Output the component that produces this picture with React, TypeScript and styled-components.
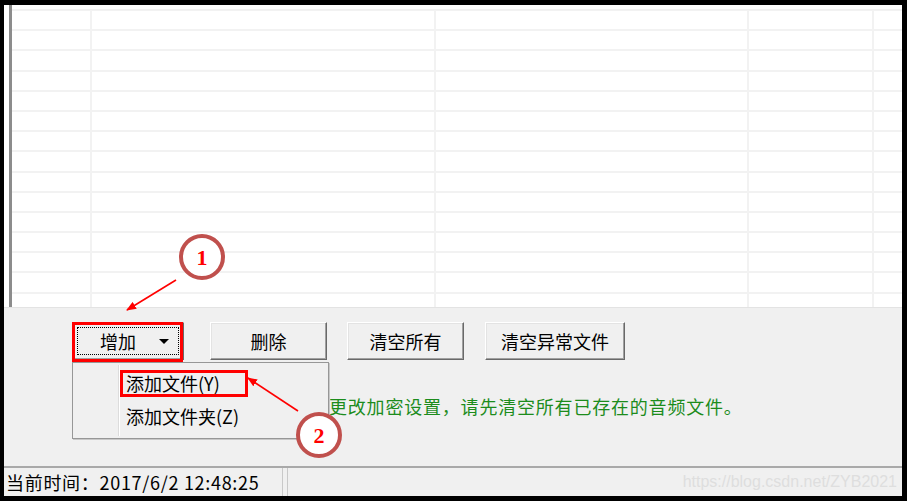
import React from 'react';
import styled, { createGlobalStyle } from 'styled-components';

const GlobalStyle = createGlobalStyle`
  html, body {
    margin: 0;
    padding: 0;
    background: #000;
  }
  * {
    box-sizing: border-box;
  }
`;

const cjk = `"Noto Sans CJK SC", "Liberation Sans", sans-serif`;

const Frame = styled.div`
  position: relative;
  width: 907px;
  height: 501px;
  border-style: solid;
  border-color: #000;
  border-width: 5px 5px 5px 4px;
  background: #f0f0f0;
  display: flex;
  flex-direction: column;
  font-family: ${cjk};
  overflow: hidden;
`;

const ListPanel = styled.div`
  height: 303px;
  background: #fff;
  padding-left: 5px;
  display: flex;
  border-bottom: 1px solid #e3e3e3;
`;

const Grid = styled.div`
  flex: 1;
  border-left: 3px solid #8c8c8c;
  display: flex;
  flex-direction: column;
  overflow: hidden;
`;

const TopGap = styled.div`
  height: 4px;
  flex: none;
`;

const Row = styled.div`
  flex: none;
  height: 20.2px;
  border-top: 2px solid #f2f2f2;
  display: grid;
  grid-template-columns: 80px 344px 313px 125px 1fr;
`;

const Cell = styled.div<{ last?: boolean }>`
  border-right: ${p => (p.last ? 'none' : '2px solid #f2f2f2')};
`;

const Controls = styled.div`
  flex: 1;
  display: flex;
  flex-direction: column;
  padding-top: 14px;
`;

const ButtonRow = styled.div`
  display: flex;
  padding-left: 68px;
`;

const Button = styled.div<{ w: number; gap?: number }>`
  position: relative;
  width: ${p => p.w}px;
  height: 38px;
  margin-right: ${p => p.gap ?? 20}px;
  background: #f0f0f0;
  border: 1px solid;
  border-color: #fff #696969 #696969 #fff;
  box-shadow: inset -1px -1px 0 #a0a0a0, inset 1px 1px 0 #e3e3e3;
  display: flex;
  align-items: center;
  justify-content: center;
  font-size: 18px;
  color: #000;
`;

const FocusRect = styled.div`
  flex: 1;
  align-self: stretch;
  margin: 4px;
  border: 1px dotted #000;
  display: flex;
  align-items: center;
  padding-left: 22px;
  padding-right: 9px;
`;

const ButtonText = styled.span`
  flex: 1;
`;

const Caret = styled.span`
  width: 0;
  height: 0;
  border-left: 5px solid transparent;
  border-right: 5px solid transparent;
  border-top: 5px solid #000;
`;

const RedBox = styled.div<{ t: number; l: number; w: number; h: number }>`
  position: absolute;
  top: ${p => p.t}px;
  left: ${p => p.l}px;
  width: ${p => p.w}px;
  height: ${p => p.h}px;
  border: 3px solid #ff0000;
  pointer-events: none;
`;

const Menu = styled.div`
  position: absolute;
  top: 39px;
  left: -1px;
  width: 257px;
  height: 77px;
  background: #f0f0f0;
  border: 1px solid #979797;
  box-shadow: 1px 1px 0 #c8c8c8;
  padding: 3px 2px;
  z-index: 2;
`;

const MenuGutter = styled.div`
  position: absolute;
  top: 2px;
  bottom: 2px;
  left: 45px;
  border-left: 1px solid #dcdcdc;
  border-right: 1px solid #fff;
`;

const MenuItem = styled.div`
  position: relative;
  height: 33px;
  display: flex;
  align-items: center;
  padding-left: 51px;
  font-size: 18px;
  color: #000;
  white-space: nowrap;
`;

const Message = styled.div`
  margin-top: 35px;
  padding-left: 325px;
  height: 22px;
  line-height: 22px;
  font-size: 18px;
  letter-spacing: 0.8px;
  color: #1c8c1c;
  white-space: nowrap;
`;

const StatusBar = styled.div`
  position: relative;
  height: 30px;
  flex: none;
  border-top: 2px solid #a9a9a9;
  display: flex;
  gap: 4px;
`;

const StatusPanel = styled.div<{ grow?: boolean }>`
  width: ${p => (p.grow ? 'auto' : '279px')};
  flex: ${p => (p.grow ? '1' : 'none')};
  border-right: ${p => (p.grow ? 'none' : '1px solid #c9c9c9')};
  border-left: ${p => (p.grow ? '1px solid #c9c9c9' : 'none')};
  padding-left: 2px;
  display: flex;
  align-items: center;
  font-size: 18px;
  letter-spacing: 0.7px;
  color: #000;
  white-space: nowrap;
`;

const Watermark = styled.div`
  position: absolute;
  right: 5px;
  top: 5px;
  font-family: "Liberation Sans", Arial, sans-serif;
  font-size: 16px;
  color: #dedede;
  pointer-events: none;
`;

const Overlay = styled.svg`
  position: absolute;
  left: -4px;
  top: -5px;
  pointer-events: none;
  z-index: 5;
`;

const rows = Array.from({ length: 15 });

const Callout: React.FC<{ cx: number; cy: number; n: string }> = ({ cx, cy, n }) => (
  <g>
    <circle cx={cx} cy={cy} r={21} fill="#fff" stroke="#c0504d" strokeWidth={4} />
    <text
      x={cx}
      y={cy + 8}
      textAnchor="middle"
      fontFamily='"Liberation Serif", serif'
      fontWeight="bold"
      fontSize={22}
      fill="#ff0000"
    >
      {n}
    </text>
  </g>
);

export default function App() {
  return (
    <>
      <GlobalStyle />
      <Frame>
        <ListPanel>
          <Grid>
            <TopGap />
            {rows.map((_, i) => (
              <Row key={i}>
                <Cell />
                <Cell />
                <Cell />
                <Cell />
                <Cell last />
              </Row>
            ))}
          </Grid>
        </ListPanel>

        <Controls>
          <ButtonRow>
            <Button w={112} gap={26}>
              <FocusRect>
                <ButtonText>增加</ButtonText>
                <Caret />
              </FocusRect>
              <RedBox t={-1} l={-1} w={111} h={40} />
              <Menu>
                <MenuGutter />
                <MenuItem>
                  添加文件(Y)
                  <RedBox t={4} l={45} w={128} h={27} />
                </MenuItem>
                <MenuItem>添加文件夹(Z)</MenuItem>
              </Menu>
            </Button>
            <Button w={117}>删除</Button>
            <Button w={117} gap={21}>清空所有</Button>
            <Button w={140}>清空异常文件</Button>
          </ButtonRow>
          <Message>更改加密设置，请先清空所有已存在的音频文件。</Message>
        </Controls>

        <StatusBar>
          <StatusPanel>当前时间：2017/6/2 12:48:25</StatusPanel>
          <StatusPanel grow />
          <Watermark>https://blog.csdn.net/ZYB2021</Watermark>
        </StatusBar>

        <Overlay width={907} height={501} viewBox="0 0 907 501">
          <defs>
            <marker id="head" markerWidth="10" markerHeight="8" refX="9" refY="4" orient="auto" markerUnits="userSpaceOnUse">
              <path d="M0,0 L10,4 L0,8 Z" fill="#ff0000" />
            </marker>
          </defs>
          <line x1={176} y1={280} x2={127} y2={310} stroke="#ff0000" strokeWidth={1.6} markerEnd="url(#head)" />
          <line x1={298} y1={411} x2={248} y2={378} stroke="#ff0000" strokeWidth={1.6} markerEnd="url(#head)" />
          <Callout cx={202} cy={257} n="1" />
          <Callout cx={319} cy={435} n="2" />
        </Overlay>
      </Frame>
    </>
  );
}
